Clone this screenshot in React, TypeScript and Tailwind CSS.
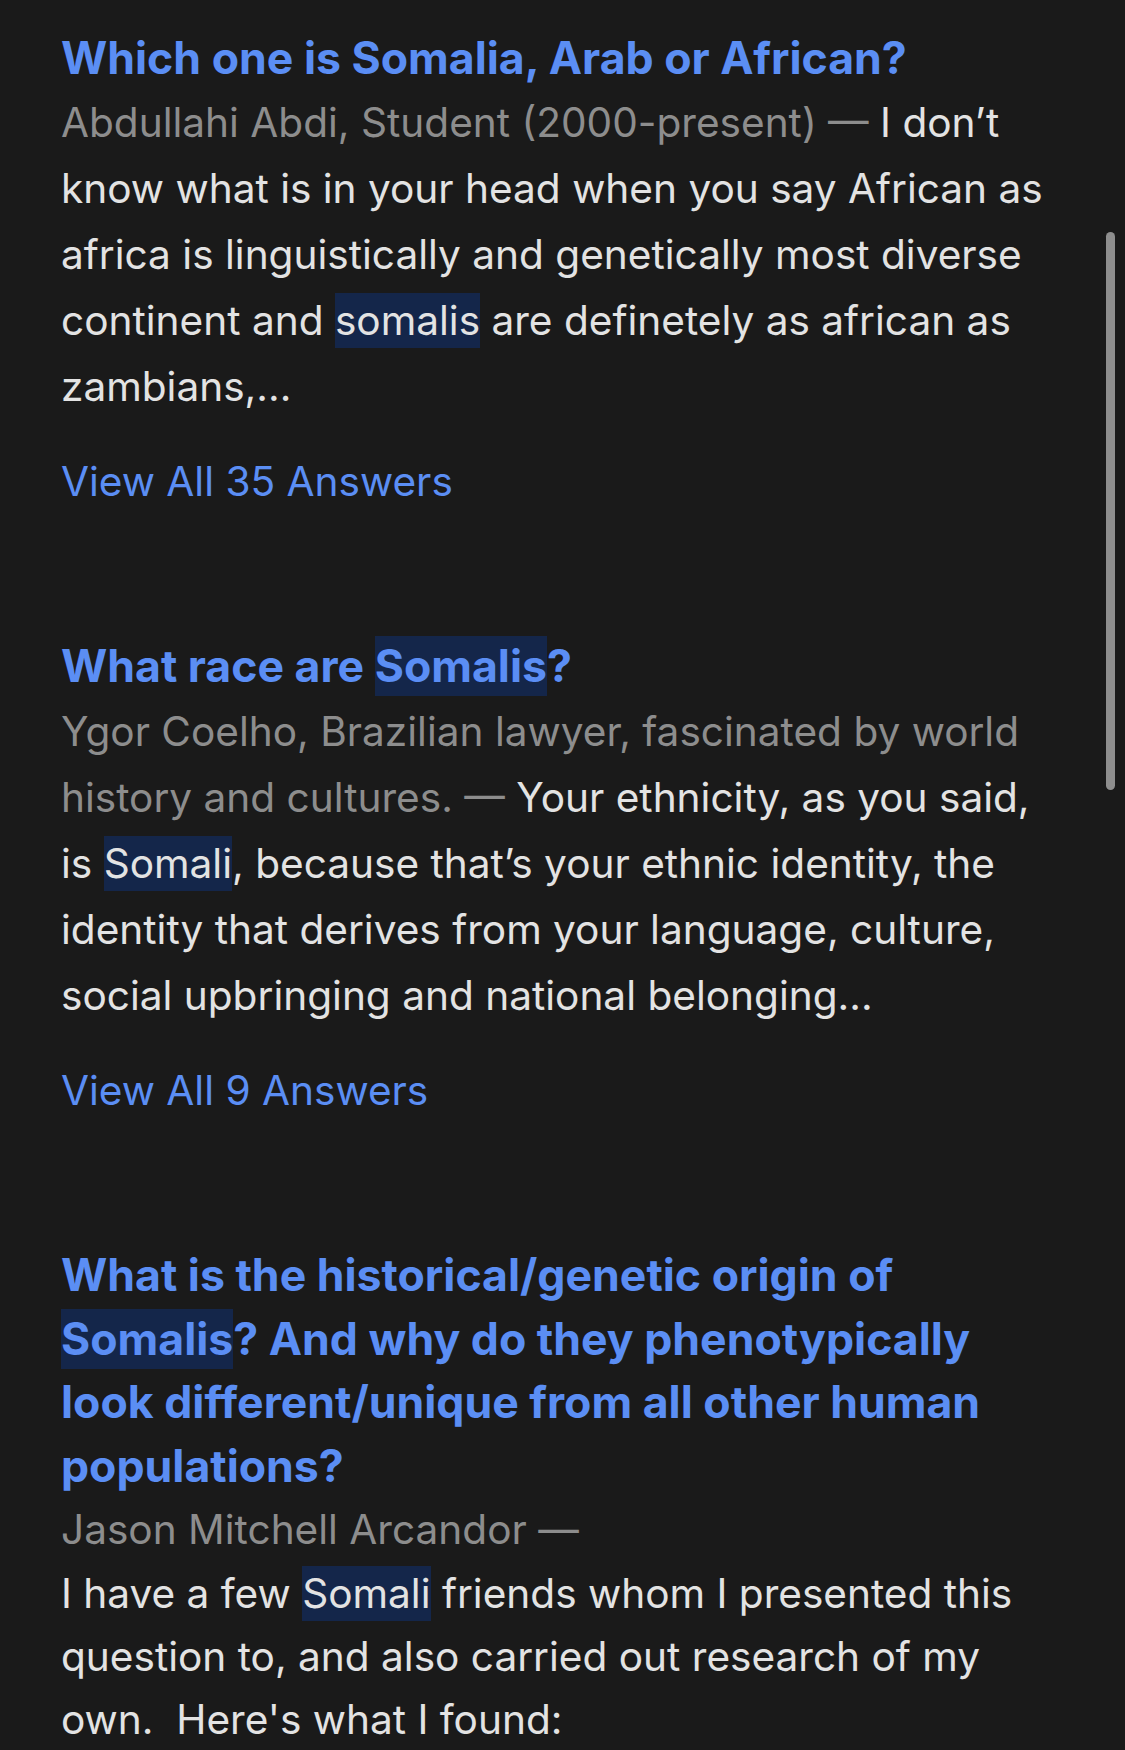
import React from 'react';

// Search results list — dark theme

const Hl = ({ children }: { children: React.ReactNode }) => (
    <span className="bg-[#14264a] py-[3px]">{children}</span>
);

const Meta = ({ children }: { children: React.ReactNode }) => (
    <span className="text-[#8d8d8d]">{children}</span>
);

const ViewAll = ({ count }: { count: number }) => (
    <a className="block mt-[29px] text-[#5b8ef4] leading-[66px] cursor-pointer">View All {count} Answers</a>
);

const App = () => {
    return (
        <div
            className="relative w-[1125px] h-[1750px] overflow-hidden bg-[#1a1a1a] text-[40.6px] text-[#e3e3e3] whitespace-nowrap"
            style={{ fontFamily: 'Inter, "Noto Sans", sans-serif' }}
        >
            <div className="pl-[61px] pr-[40px] pt-[27px]">
                {/* Result 1 */}
                <section>
                    <h2 className="font-bold text-[44.6px] text-[#5b8ef4] leading-[63px]">Which one is Somalia, Arab or African?</h2>
                    <p className="leading-[66px]">
                        <Meta>Abdullahi Abdi, Student (2000-present) — </Meta>I don’t
                        <br />
                        know what is in your head when you say African as
                        <br />
                        africa is linguistically and genetically most diverse
                        <br />
                        continent and <Hl>somalis</Hl> are definetely as african as
                        <br />
                        zambians,...
                    </p>
                    <ViewAll count={35} />
                </section>

                {/* Result 2 */}
                <section className="mt-[120px]">
                    <h2 className="font-bold text-[44.6px] text-[#5b8ef4] leading-[63px]">
                        What race are <Hl>Somalis</Hl>?
                    </h2>
                    <p className="leading-[66px] pt-[1px]">
                        <Meta>Ygor Coelho, Brazilian lawyer, fascinated by world</Meta>
                        <br />
                        <Meta>history and cultures. — </Meta>Your ethnicity, as you said,
                        <br />
                        is <Hl>Somali</Hl>, because that’s your ethnic identity, the
                        <br />
                        identity that derives from your language, culture,
                        <br />
                        social upbringing and national belonging...
                    </p>
                    <ViewAll count={9} />
                </section>

                {/* Result 3 */}
                <section className="mt-[120px]">
                    <h2 className="font-bold text-[44.6px] text-[#5b8ef4] leading-[63.6px]">
                        What is the historical/genetic origin of
                        <br />
                        <Hl>Somalis</Hl>? And why do they phenotypically
                        <br />
                        look different/unique from all other human
                        <br />
                        populations?
                    </h2>
                    <p className="leading-[64px]">
                        <Meta>Jason Mitchell Arcandor —</Meta>
                    </p>
                    <p className="leading-[63px]">
                        I have a few <Hl>Somali</Hl> friends whom I presented this
                        <br />
                        question to, and also carried out research of my
                        <br />
                        own.&nbsp; Here's what I found:
                    </p>
                </section>
            </div>

            {/* scroll indicator */}
            <div className="absolute left-[1106px] top-[232px] w-[9px] h-[558px] rounded-full bg-[#8e8e8e]" />
        </div>
    );
};

export default App;
